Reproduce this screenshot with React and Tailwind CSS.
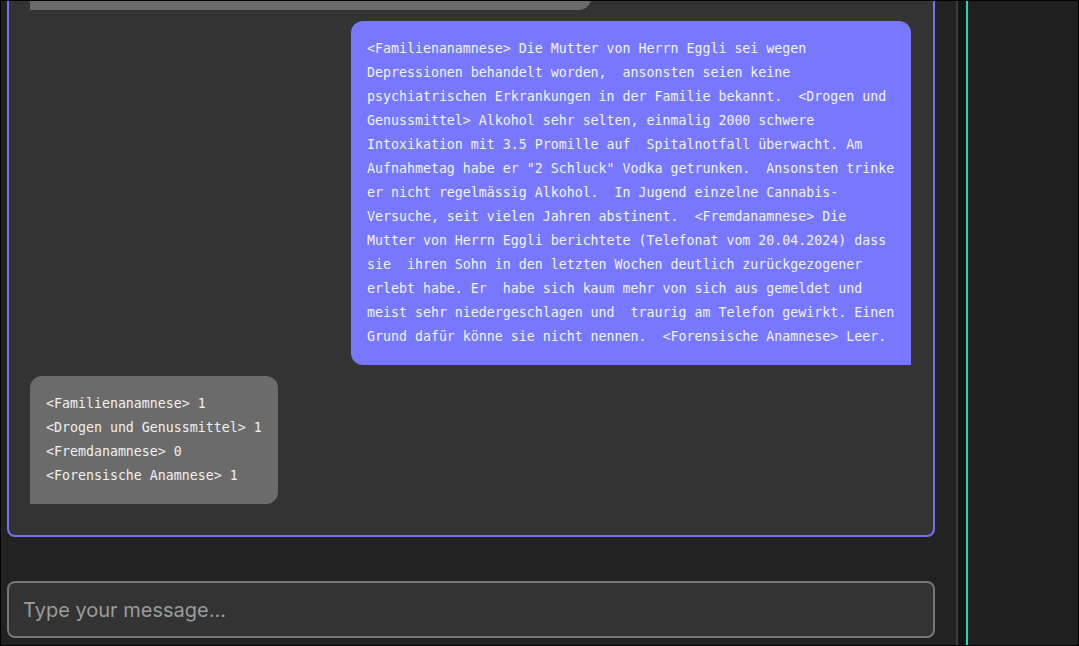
import React from "react";

const messages = [
  {
    role: "bot",
    text: "<Sozialanamnese> 1\n<Somatische Anamnese> 1\n<Psychiatrische Anamnese> 1",
  },
  {
    role: "user",
    text:
      '<Familienanamnese> Die Mutter von Herrn Eggli sei wegen Depressionen behandelt worden,  ansonsten seien keine psychiatrischen Erkrankungen in der Familie bekannt.  <Drogen und Genussmittel> Alkohol sehr selten, einmalig 2000 schwere Intoxikation mit 3.5 Promille auf  Spitalnotfall überwacht. Am Aufnahmetag habe er "2 Schluck" Vodka getrunken.  Ansonsten trinke er nicht regelmässig Alkohol.  In Jugend einzelne Cannabis-Versuche, seit vielen Jahren abstinent.  <Fremdanamnese> Die Mutter von Herrn Eggli berichtete (Telefonat vom 20.04.2024) dass sie  ihren Sohn in den letzten Wochen deutlich zurückgezogener erlebt habe. Er  habe sich kaum mehr von sich aus gemeldet und meist sehr niedergeschlagen und  traurig am Telefon gewirkt. Einen Grund dafür könne sie nicht nennen.  <Forensische Anamnese> Leer.',
  },
  {
    role: "bot",
    text: "<Familienanamnese> 1\n<Drogen und Genussmittel> 1\n<Fremdanamnese> 0\n<Forensische Anamnese> 1",
  },
];

const Bubble = ({ role, text }) => {
  if (role === "user") {
    return (
      <div className="self-end max-w-[560px] bg-[#7878fe] text-[#f2f2ff] rounded-xl rounded-br-none pl-4 pr-[15px] py-4 whitespace-pre-wrap font-['DejaVu_Sans_Mono',monospace] text-[13.28px] leading-6">
        {text}
      </div>
    );
  }
  return (
    <div className="self-start max-w-[560px] bg-[#6b6b6b] text-[#f0f0f0] rounded-xl rounded-bl-none px-4 py-4 whitespace-pre-wrap font-['DejaVu_Sans_Mono',monospace] text-[13.28px] leading-6">
      {text}
    </div>
  );
};

const App = () => {
  return (
    <div className="h-screen w-full border border-black flex bg-[#222222] overflow-hidden">
      {/* chat column */}
      <div className="w-[957px] h-full flex flex-col pl-[6px] pr-[21px] pb-[7px] border-r-2 border-[#3c3c3c]">
        <div className="flex-1 min-h-0 overflow-hidden bg-[#333333] border-2 border-t-0 border-[#7272f2] rounded-b-lg flex flex-col justify-end gap-[11px] pl-[21px] pr-[22px] pb-[31px]">
          <div className="self-start w-[561px] bg-[#6b6b6b] rounded-xl rounded-bl-none h-[60px] shrink-0"></div>
          {messages.slice(1).map((m, i) => (
            <Bubble key={i} role={m.role} text={m.text} />
          ))}
        </div>

        <div className="h-[44px] shrink-0"></div>

        {/* input */}
        <input
          type="text"
          placeholder="Type your message..."
          className="h-[57px] shrink-0 w-full bg-[#333333] border-2 border-[#777777] rounded-lg px-[14px] text-[20px] text-white font-['Inter',sans-serif] placeholder:text-[#9b9b9b] outline-none"
        />
      </div>

      {/* divider */}
      <div className="w-2 h-full bg-[#141414]"></div>
      <div className="w-[2px] h-full bg-[#20dab2]"></div>

      {/* side panel */}
      <div className="flex-1 h-full bg-[#1f1f1f]"></div>
    </div>
  );
};

export default App;
